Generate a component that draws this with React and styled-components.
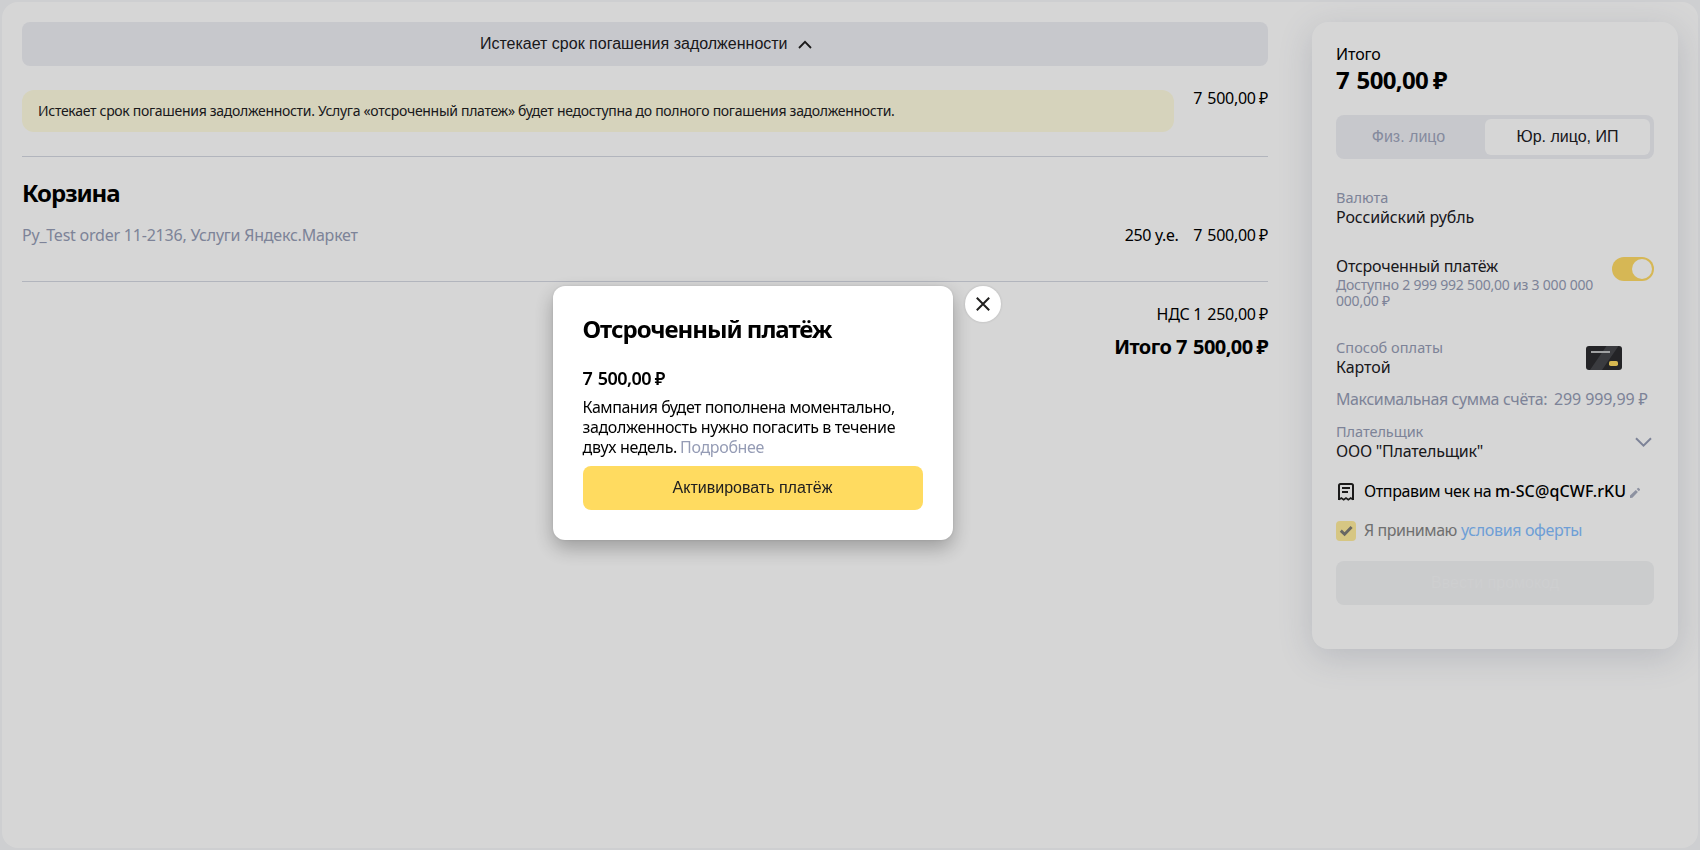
import React from 'react';
import styled, { createGlobalStyle } from 'styled-components';

const GlobalStyle = createGlobalStyle`
  * { box-sizing: border-box; }
  html, body { margin: 0; height: 100%; overflow: hidden; }
  body {
    background: #f6f7f9;
    color: #000;
    font-family: "Noto Sans", "Open Sans", sans-serif;
    font-size: 16px;
    line-height: 20px;
  }
  button { border: 0; padding: 0; font: 16px "Liberation Sans", Arial, sans-serif; color: #21201f; }
`;

const Page = styled.div`
  height: 850px;
  padding: 2px;
`;
const Sheet = styled.div`
  height: 846px;
  padding: 20px;
  border-radius: 16px;
  background: #fff;
  display: flex;
  align-items: flex-start;
  gap: 44px;
`;

/* Text with its size, weight and tracking */
const Text = styled.span`
  display: block;
  white-space: pre;
  font-size: ${(p) => p.$size || 16}px;
  line-height: ${(p) => p.$line || 20}px;
  font-weight: ${(p) => p.$weight || 400};
  letter-spacing: ${(p) => p.$track || 0}px;
  color: ${(p) => p.$color || 'inherit'};
`;
/* Money amount: wide thousands gap, currency sign pulled in */
const Amount = styled.span`
  word-spacing: 0.08em;
`;
const Ruble = styled.span`
  margin-left: -0.11em;
`;
const Money = ({ value }) => (
  <Amount>
    {value} <Ruble>₽</Ruble>
  </Amount>
);
const MUTED = '#959cb5';
const INK = '#21201f';

const Main = styled.main`
  width: 1246px;
  display: flex;
  flex-direction: column;
`;
const Accordion = styled.button`
  height: 44px;
  border-radius: 8px;
  background: #eeeff4;
  display: flex;
  align-items: center;
  justify-content: center;
  gap: 10.5px;
  padding-left: 2px;
`;
const NoticeRow = styled.div`
  margin-top: 24px;
  height: 42px;
  display: flex;
  justify-content: space-between;
  align-items: flex-start;
`;
const Notice = styled.div`
  width: 1152px;
  height: 42px;
  padding: 12px 16px;
  border-radius: 12px;
  background: #fffce0;
`;
const Divider = styled.hr`
  width: 100%;
  height: 1px;
  border: 0;
  margin: ${(p) => p.$top}px 0 0;
  background: #d5d8e2;
`;
const CartTitle = styled.h2`
  margin: 22px 0 18px;
  font-size: 24px;
  line-height: 28px;
  letter-spacing: -1.05px;
`;
const CartRow = styled.div`
  display: flex;
  justify-content: space-between;
`;
const Amounts = styled.div`
  display: flex;
  gap: 15px;
`;
const Totals = styled.div`
  margin-top: 22px;
  display: flex;
  flex-direction: column;
  align-items: flex-end;
  gap: 11px;
`;

const Panel = styled.aside`
  width: 366px;
  height: 627px;
  padding: 22px 24px 44px;
  border-radius: 16px;
  background: #fff;
  box-shadow: 0 8px 34px rgba(80, 92, 122, 0.2);
  display: flex;
  flex-direction: column;
`;
const Segmented = styled.div`
  margin: 20px 0 29px;
  height: 44px;
  flex: none;
  padding: 4px;
  border-radius: 8px;
  background: #eeeff4;
  display: flex;
`;
const Segment = styled.button`
  width: ${(p) => p.$width}px;
  padding-right: ${(p) => (p.$active ? 0 : 8)}px;
  border-radius: 6px;
  background: ${(p) => (p.$active ? '#fff' : 'transparent')};
  color: ${(p) => (p.$active ? INK : '#9fa6bd')};
`;
const Field = styled.div`
  display: flex;
  flex-direction: column;
  gap: 1px;
`;
const FieldRow = styled.div`
  display: flex;
  justify-content: space-between;
  align-items: flex-start;
  margin-top: ${(p) => p.$top}px;
`;
const Switch = styled.div`
  width: 42px;
  height: 24px;
  margin-top: 1px;
  padding: 2px;
  border-radius: 12px;
  background: #ffdb66;
  display: flex;
  justify-content: flex-end;
`;
const Knob = styled.div`
  width: 20px;
  height: 20px;
  border-radius: 50%;
  background: #fff;
`;
const IconSlot = styled.div`
  display: flex;
  padding: ${(p) => p.$pad};
`;
const LimitRow = styled.div`
  margin-top: 12px;
  display: flex;
  gap: 7px;
`;
const ReceiptRow = styled.div`
  margin-top: 20px;
  height: 20px;
  display: flex;
  align-items: flex-start;
`;
const OfferRow = styled.div`
  margin-top: 20px;
  height: 20px;
  display: flex;
  align-items: flex-start;
  gap: 8px;
`;
const OfferText = styled.div`
  display: flex;
  gap: 4px;
`;
const Checkbox = styled.div`
  width: 20px;
  height: 20px;
  border-radius: 4px;
  background: #ffec9c;
`;
const PromoButton = styled.button`
  margin-top: 20px;
  height: 44px;
  flex: none;
  border-radius: 8px;
  background: #f2f3f5;
  color: #f6f7f8;
`;

const Overlay = styled.div`
  position: fixed;
  inset: 0;
  padding: 286px 0 0 553px;
  background: rgba(0, 0, 0, 0.16);
  display: flex;
  align-items: flex-start;
  gap: 12px;
`;
const Dialog = styled.section`
  width: 400px;
  height: 254px;
  padding: 29px 30px 30px;
  border-radius: 12px;
  background: #fff;
  box-shadow: 0 8px 20px rgba(0, 0, 0, 0.28), 0 0 3px rgba(0, 0, 0, 0.1);
  display: flex;
  flex-direction: column;
`;
const DialogText = styled.div`
  margin-left: -0.5px;
`;
const DialogTitle = styled.h2`
  margin: 0 0 25px;
  font-size: 24px;
  line-height: 28px;
  letter-spacing: -1.03px;
`;
const Description = styled.div`
  margin: 9px 0;
`;
const LastLine = styled.div`
  display: flex;
  gap: 3px;
`;
const PrimaryButton = styled.button`
  height: 44px;
  padding-right: 1px;
  border-radius: 8px;
  background: #ffdb60;
`;
const CloseButton = styled.button`
  width: 36px;
  height: 36px;
  border-radius: 50%;
  background: #fff;
  box-shadow: 0 0 3px rgba(0, 0, 0, 0.16);
  display: grid;
  place-items: center;
`;

const ChevronUp = () => (
  <svg width="14" height="9" viewBox="0 0 14 9" fill="none">
    <path d="M1 8 7 1.8 13 8" stroke={INK} strokeWidth="1.8" />
  </svg>
);
const ChevronDown = () => (
  <svg width="17" height="11" viewBox="0 0 17 11" fill="none">
    <path d="M1 1.2 8.5 8.6 16 1.2" stroke={MUTED} strokeWidth="2" />
  </svg>
);
const CardIcon = () => (
  <svg width="36" height="24" viewBox="0 0 36 24">
    <rect width="36" height="24" rx="3" fill="#2b2c2f" />
    <path d="M20.5 0H32.5L16 24H4Z" fill="#46474c" />
    <rect x="5" y="5" width="19" height="2" fill="#bfc0c2" />
    <rect x="23" y="15" width="9" height="5" rx="1.8" fill="#ffdb60" />
  </svg>
);
const ReceiptIcon = () => (
  <svg width="20" height="20" viewBox="0 0 20 20" fill="none" stroke={INK}>
    <path d="M3 19V4.6Q3 3 4.6 3H15.4Q17 3 17 4.6V19" strokeWidth="2" />
    <path d="M3 18.6 5.3 17 7.7 18.6 10 17 12.3 18.6 14.7 17 17 18.6" strokeWidth="1.7" />
    <path d="M6 7H14M6 11H12" strokeWidth="1.8" />
  </svg>
);
const PencilIcon = () => (
  <svg width="12" height="12" viewBox="0 0 12 12" fill="#a9aec0">
    <path d="M1 11V8.4L6.8 2.9 8.9 5.1 3.4 10.8ZM7.7 2.1 8.8 1.1Q9.4.6 10 1.2L10.8 2Q11.3 2.6 10.8 3.2L9.8 4.2Z" />
  </svg>
);
const CheckIcon = () => (
  <svg width="20" height="20" viewBox="0 0 20 20" fill="none">
    <path d="M4.8 9.6 8.6 13.2 15.6 6.1" stroke="#7c7b77" strokeWidth="2.9" />
  </svg>
);
const CloseIcon = () => (
  <svg width="14" height="14" viewBox="0 0 14 14">
    <path d="M.8.8 13.2 13.2M13.2.8.8 13.2" stroke={INK} strokeWidth="2" />
  </svg>
);

export default function App() {
  return (
    <>
      <GlobalStyle />
      <Page>
        <Sheet>
          <Main>
            <Accordion>
              <span>Истекает срок погашения задолженности</span>
              <ChevronUp />
            </Accordion>
            <NoticeRow>
              <Notice>
                <Text $size={14} $line={18} $track={-0.3} $color={INK}>
                  Истекает срок погашения задолженности. Услуга «отсроченный платеж» будет недоступна до полного погашения задолженности.
                </Text>
              </Notice>
              <Text $line={16} $track={-0.3}><Money value="7 500,00" /></Text>
            </NoticeRow>
            <Divider $top={24} />
            <CartTitle>Корзина</CartTitle>
            <CartRow>
              <Text $color={MUTED} $track={-0.22}>Py_Test order 11-2136, Услуги Яндекс.Маркет</Text>
              <Amounts>
                <Text $track={-0.37}>250 у.е.</Text>
                <Text $track={-0.3}><Money value="7 500,00" /></Text>
              </Amounts>
            </CartRow>
            <Divider $top={36} />
            <Totals>
              <Text $track={-0.3}>НДС <Money value="1 250,00" /></Text>
              <Text $size={20} $line={24} $weight={700} $track={-0.57}>Итого <Money value="7 500,00" /></Text>
            </Totals>
          </Main>

          <Panel>
            <Field>
              <Text $track={-0.1}>Итого</Text>
              <Text $size={24} $line={30} $weight={700} $track={-0.65}><Money value="7 500,00" /></Text>
            </Field>
            <Segmented>
              <Segment $width={145}>Физ. лицо</Segment>
              <Segment $width={165} $active>Юр. лицо, ИП</Segment>
            </Segmented>
            <Field>
              <Text $size={14.5} $line={18} $track={0} $color={MUTED}>Валюта</Text>
              <Text $track={-0.12} $color={INK}>Российский рубль</Text>
            </Field>
            <FieldRow $top={29}>
              <Field>
                <Text $track={-0.24} $color={INK}>Отсроченный платёж</Text>
                <Text $size={14} $line={16} $track={-0.21} $color={MUTED}>{'Доступно 2 999 992 500,00 из 3 000 000\n000,00 ₽'}</Text>
              </Field>
              <Switch><Knob /></Switch>
            </FieldRow>
            <FieldRow $top={29}>
              <Field>
                <Text $size={14.5} $line={18} $track={0.05} $color={MUTED}>Способ оплаты</Text>
                <Text $track={-0.08} $color={INK}>Картой</Text>
              </Field>
              <IconSlot $pad="8px 32px 0 0"><CardIcon /></IconSlot>
            </FieldRow>
            <LimitRow>
              <Text $track={-0.4} $color={MUTED}>Максимальная сумма счёта:</Text>
              <Text $track={-0.13} $color={MUTED}>299 999,99 ₽</Text>
            </LimitRow>
            <FieldRow $top={13}>
              <Field>
                <Text $size={14.5} $line={18} $track={-0.05} $color={MUTED}>Плательщик</Text>
                <Text $track={-0.22} $color={INK}>ООО "Плательщик"</Text>
              </Field>
              <IconSlot $pad="15px 2.5px 0 0"><ChevronDown /></IconSlot>
            </FieldRow>
            <ReceiptRow>
              <ReceiptIcon />
              <IconSlot $pad="0 3px 0 8px">
                <Text $track={-0.38}>{'Отправим чек на '}</Text>
                <Text $weight={500} $track={0.15}>m-SC@qCWF.rKU</Text>
              </IconSlot>
              <IconSlot $pad="6px 0 0"><PencilIcon /></IconSlot>
            </ReceiptRow>
            <OfferRow>
              <Checkbox><CheckIcon /></Checkbox>
              <OfferText>
                <Text $line={18} $track={-0.45} $color="#858585">Я принимаю</Text>
                <Text $line={18} $track={-0.36} $color="#83bdff">условия оферты</Text>
              </OfferText>
            </OfferRow>
            <PromoButton>Ввести промокод</PromoButton>
          </Panel>
        </Sheet>
      </Page>

      <Overlay>
        <Dialog>
          <DialogText>
            <DialogTitle>Отсроченный платёж</DialogTitle>
            <Text $size={18} $weight={600} $track={-0.55}><Money value="7 500,00" /></Text>
            <Description>
              <Text $track={-0.46}>Кампания будет пополнена моментально,</Text>
              <Text $track={-0.355}>задолженность нужно погасить в течение</Text>
              <LastLine>
                <Text $track={-0.33}>двух недель.</Text>
                <Text $track={-0.33} $color={MUTED}>Подробнее</Text>
              </LastLine>
            </Description>
          </DialogText>
          <PrimaryButton>Активировать платёж</PrimaryButton>
        </Dialog>
        <CloseButton><CloseIcon /></CloseButton>
      </Overlay>
    </>
  );
}
